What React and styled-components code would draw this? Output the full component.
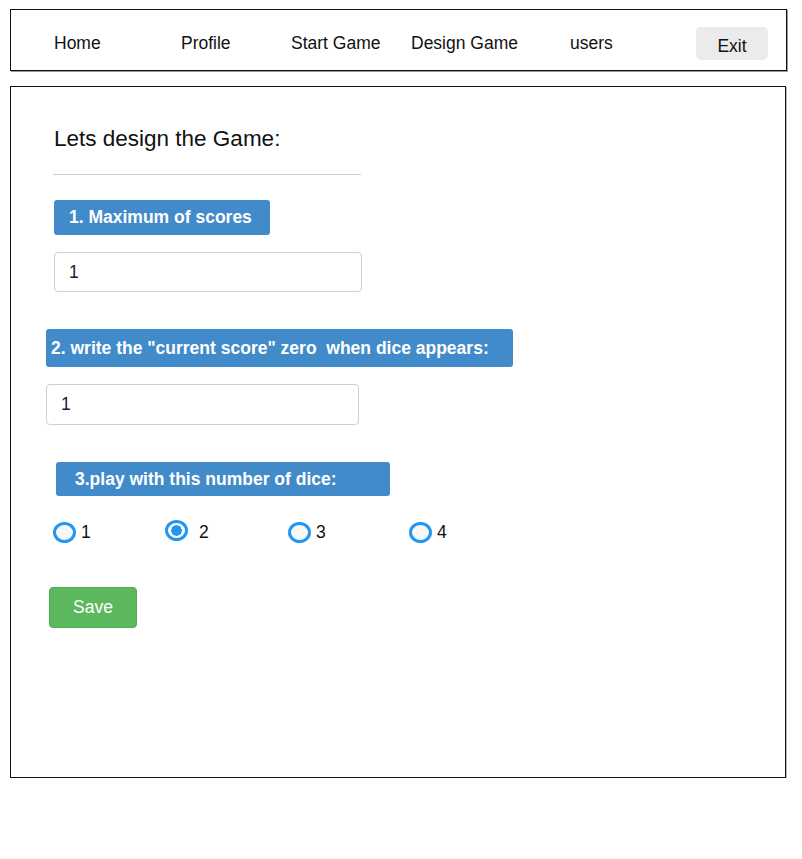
import React, { useState } from 'react';
import styled, { createGlobalStyle } from 'styled-components';

var GlobalStyle = createGlobalStyle`
  html, body {
    margin: 0;
    padding: 0;
    background: #fff;
    font-family: "Liberation Sans", Arial, sans-serif;
  }
`;

var Page = styled.div`
  padding: 9px 0 0 10px;
  width: 777px;
`;

var Navbar = styled.nav`
  display: flex;
  align-items: center;
  height: 60px;
  border: 1px solid #111;
  box-shadow: 1px 1px 0 #999;
  padding-left: 43px;
`;

var NavLink = styled.a`
  width: ${p => p.$w}px;
  font-size: 17.5px;
  color: #111;
  text-decoration: none;
  margin-top: 7px;
`;

var ExitButton = styled.button`
  width: 72px;
  height: 33px;
  margin-top: 6px;
  border: none;
  border-radius: 5px;
  background: #ebebeb;
  font-family: inherit;
  font-size: 17.5px;
  color: #111;
  padding-top: 7px;
`;

var Panel = styled.main`
  margin-top: 15px;
  width: 774px;
  height: 690px;
  border: 1px solid #111;
  box-shadow: 1px 1px 0 #bbb;
`;

var Title = styled.h2`
  margin: 39px 0 0 43px;
  font-size: 22.5px;
  line-height: 26px;
  font-weight: normal;
  color: #111;
`;

var Rule = styled.hr`
  margin: 22px 0 0 42px;
  width: 308px;
  border: none;
  border-top: 1px solid #d0d0d0;
`;

var Label = styled.div`
  margin: ${p => p.$top}px 0 0 ${p => p.$left}px;
  width: ${p => p.$w}px;
  height: ${p => p.$h}px;
  box-sizing: border-box;
  padding-left: ${p => p.$pad}px;
  display: flex;
  align-items: center;
  background: #428bca;
  border-radius: 3px;
  color: #fff;
  font-weight: bold;
  font-size: 17.5px;
`;

var TextInput = styled.input`
  display: block;
  margin: ${p => p.$top}px 0 0 ${p => p.$left}px;
  width: ${p => p.$w}px;
  height: ${p => p.$h}px;
  box-sizing: border-box;
  border: 1px solid #cfcfcf;
  border-radius: 4px;
  padding: 0 14px;
  font-family: inherit;
  font-size: 17.5px;
  color: #1a1a3a;
  outline: none;
`;

var RadioRow = styled.div`
  display: flex;
  align-items: center;
  margin: 23px 0 0 42px;
  height: 26px;
`;

var RadioItem = styled.label`
  display: flex;
  align-items: center;
  width: ${p => p.$w}px;
  font-size: 17.5px;
  color: #111;
`;

var Radio = styled.input`
  appearance: none;
  margin: ${p => (p.checked ? '-4px 11px 0 0' : '0 5px 0 0')};
  width: 23px;
  height: 21px;
  box-sizing: border-box;
  border: 3px solid #2196f3;
  border-radius: 50%;
  background: #f7f7f7;
  &:checked {
    background: radial-gradient(circle, #2196f3 0 5px, #fff 5.5px);
  }
`;

var SaveButton = styled.button`
  display: block;
  margin: 42px 0 0 38px;
  width: 88px;
  height: 41px;
  border: 1px solid #4cae4c;
  border-radius: 4px;
  background: #5cb85c;
  color: #fff;
  font-family: inherit;
  font-size: 17.5px;
`;

var links = [
  ['Home', 127],
  ['Profile', 110],
  ['Start Game', 120],
  ['Design Game', 159],
  ['users', 126],
];

var dice = [
  ['1', 112],
  ['2', 123],
  ['3', 121],
  ['4', 60],
];

export default function App() {
  var [count, setCount] = useState('2');
  return (
    <Page>
      <GlobalStyle />
      <Navbar>
        {links.map(([t, w]) => (
          <NavLink key={t} $w={w} href="#">{t}</NavLink>
        ))}
        <ExitButton>Exit</ExitButton>
      </Navbar>
      <Panel>
        <Title>Lets design the Game:</Title>
        <Rule />
        <Label $top={25} $left={43} $w={216} $h={35} $pad={15}>1. Maximum of scores</Label>
        <TextInput $top={17} $left={43} $w={308} $h={40} defaultValue="1" />
        <Label $top={37} $left={35} $w={467} $h={38} $pad={5}>2. write the "current score" zero&nbsp; when dice appears:</Label>
        <TextInput $top={17} $left={35} $w={313} $h={41} defaultValue="1" />
        <Label $top={37} $left={45} $w={334} $h={34} $pad={19}>3.play with this number of dice:</Label>
        <RadioRow>
          {dice.map(([n, w]) => (
            <RadioItem key={n} $w={w}>
              <Radio type="radio" name="dice" checked={count === n} onChange={() => setCount(n)} />
              {n}
            </RadioItem>
          ))}
        </RadioRow>
        <SaveButton>Save</SaveButton>
      </Panel>
    </Page>
  );
}
